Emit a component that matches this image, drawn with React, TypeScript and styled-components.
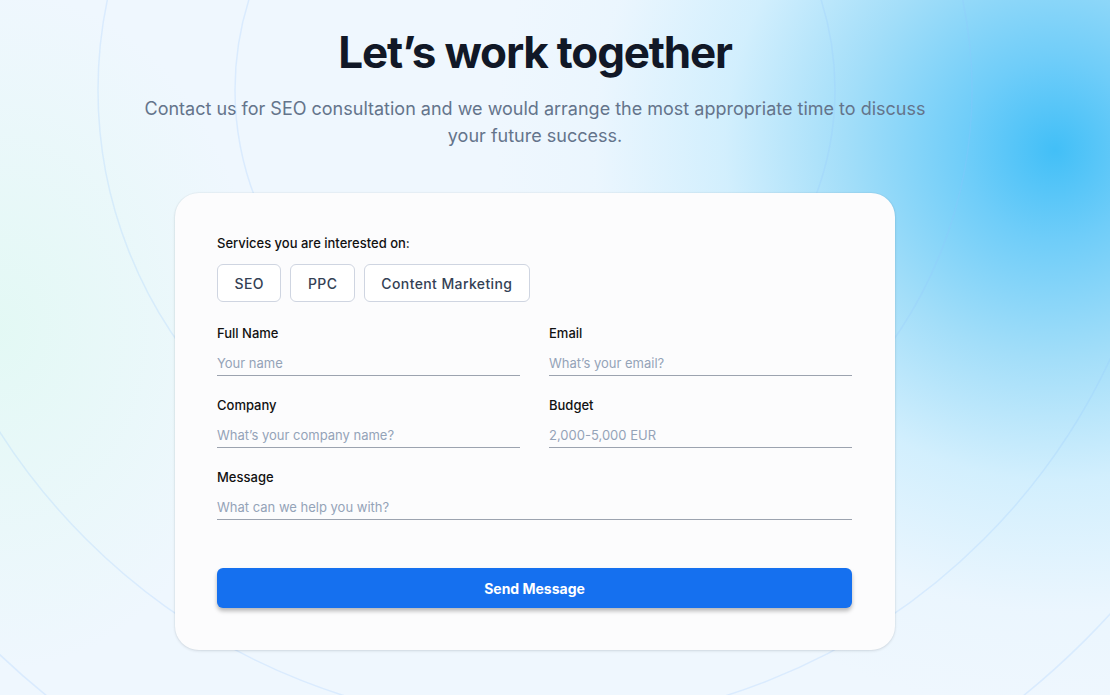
import React from "react";
import styled, { createGlobalStyle } from "styled-components";

const GlobalStyle = createGlobalStyle`
  html, body { margin: 0; padding: 0; }
  body {
    font-family: Inter, "Noto Sans", Arial, sans-serif;
    background: #eff7fe;
    -webkit-font-smoothing: antialiased;
  }
  * { box-sizing: border-box; }
`;

const Page = styled.div`
  position: relative;
  width: 100%;
  min-height: 695px;
  overflow: hidden;
  background:
    radial-gradient(circle at 1055px 150px, #42bff7 0px, #6fcdf9 90px, #a3def9 210px, rgba(200,236,253,0.75) 330px, rgba(225,243,254,0.3) 460px, rgba(239,247,254,0) 560px),
    radial-gradient(ellipse 260px 340px at 0px 330px, rgba(224,249,242,0.8) 0%, rgba(239,247,254,0) 100%),
    #eff7fe;
`;

const Rings = styled.svg`
  position: absolute;
  inset: 0;
  width: 1110px;
  height: 695px;
  pointer-events: none;
`;

const Content = styled.main`
  position: relative;
  width: 1070px;
  display: flex;
  flex-direction: column;
  align-items: center;
  padding-top: 26px;
  padding-bottom: 46px;
`;

const Title = styled.h1`
  margin: 0;
  font-size: 44px;
  line-height: 53px;
  font-weight: 700;
  letter-spacing: -0.027em;
  color: #111827;
`;

const Subtitle = styled.p`
  margin: 16px 0 0;
  max-width: 800px;
  text-align: center;
  font-size: 18px;
  line-height: 27px;
  color: #64748b;
`;

const Card = styled.form`
  margin-top: 44px;
  width: 720px;
  background: #fcfcfd;
  border-radius: 24px;
  padding: 42px 43px 42px 42px;
  box-shadow: 0 1px 3px rgba(15, 23, 42, 0.12), 0 0 0 1px rgba(15, 23, 42, 0.025);
  display: flex;
  flex-direction: column;
`;

const Label = styled.label`
  display: block;
  font-size: 13px;
  line-height: 16px;
  font-weight: 450;
  color: #111111;
`;

const Chips = styled.div`
  display: flex;
  gap: 9px;
  margin-top: 13px;
`;

const Chip = styled.button`
  height: 38px;
  padding: 0 16.5px;
  border: 1px solid #cfd5e1;
  border-radius: 6px;
  background: #ffffff;
  font-family: Inter, sans-serif;
  font-size: 14px;
  font-weight: 550;
  letter-spacing: 0.028em;
  color: #344155;
  cursor: pointer;
`;

const Grid = styled.div`
  display: grid;
  grid-template-columns: 1fr 1fr;
  column-gap: 29px;
  row-gap: 21px;
  margin-top: 23px;
`;

const Field = styled.div<{ $wide?: boolean }>`
  display: flex;
  flex-direction: column;
  gap: 8px;
  grid-column: ${(p) => (p.$wide ? "1 / -1" : "auto")};
`;

const Input = styled.input`
  width: 100%;
  border: none;
  border-bottom: 1px solid #9ca3af;
  background: transparent;
  padding: 6px 0 4px;
  font-family: Inter, sans-serif;
  font-size: 13px;
  line-height: 16px;
  color: #111827;
  outline: none;
  &::placeholder { color: #94a3b8; }
`;

const Submit = styled.button`
  margin-top: 48px;
  height: 40px;
  width: 100%;
  border: none;
  border-radius: 6px;
  background: #1570ef;
  color: #ffffff;
  font-family: Inter, sans-serif;
  font-size: 14px;
  font-weight: 700;
  box-shadow: 0 3px 4px rgba(0, 0, 0, 0.28);
  cursor: pointer;
`;

const services = ["SEO", "PPC", "Content Marketing"];

const fields = [
  { label: "Full Name", placeholder: "Your name" },
  { label: "Email", placeholder: "What’s your email?" },
  { label: "Company", placeholder: "What’s your company name?" },
  { label: "Budget", placeholder: "2,000-5,000 EUR" },
  { label: "Message", placeholder: "What can we help you with?", wide: true },
];

export default function App() {
  return (
    <>
      <GlobalStyle />
      <Page>
        <Rings viewBox="0 0 1110 695">
          {[300, 437, 635, 778].map((r) => (
            <circle key={r} cx="535" cy="90" r={r} fill="none" stroke="rgba(147,197,253,0.22)" strokeWidth="1.5" />
          ))}
        </Rings>
        <Content>
          <Title>Let’s work together</Title>
          <Subtitle>
            Contact us for SEO consultation and we would arrange the most appropriate time to discuss your future success.
          </Subtitle>
          <Card onSubmit={(e) => e.preventDefault()}>
            <Label>Services you are interested on:</Label>
            <Chips>
              {services.map((s) => (
                <Chip type="button" key={s}>{s}</Chip>
              ))}
            </Chips>
            <Grid>
              {fields.map((f) => (
                <Field key={f.label} $wide={f.wide}>
                  <Label>{f.label}</Label>
                  <Input placeholder={f.placeholder} />
                </Field>
              ))}
            </Grid>
            <Submit type="submit">Send Message</Submit>
          </Card>
        </Content>
      </Page>
    </>
  );
}
